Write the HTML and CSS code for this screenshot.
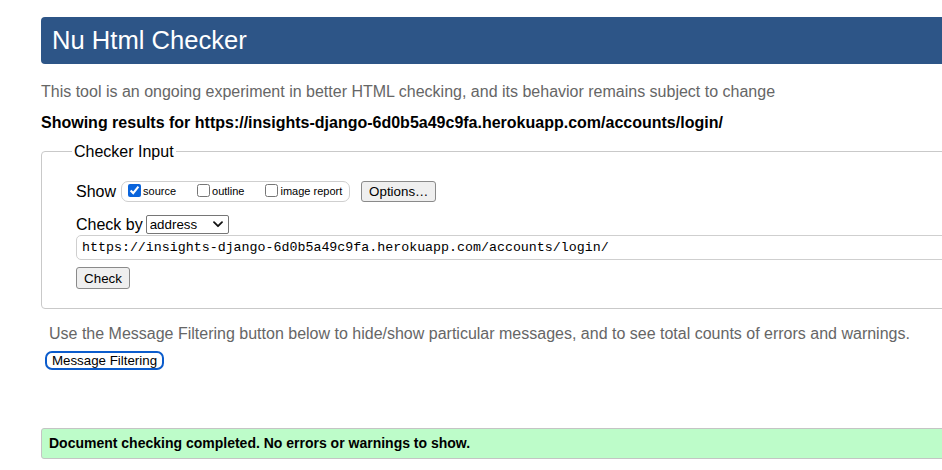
FILE: index.html
```html
<!DOCTYPE html>
<html lang="en">
<head>
<meta charset="utf-8">
<title>Nu Html Checker</title>
<link rel="stylesheet" href="styles.css">
</head>
<body>
<div class="page">
  <h1 class="title">Nu Html Checker</h1>
  <p class="intro">This tool is an ongoing experiment in better HTML checking, and its behavior remains subject to change</p>
  <p class="results">Showing results for https://insights-django-6d0b5a49c9fa.herokuapp.com/accounts/login/</p>
  <fieldset class="checker">
    <legend class="legend">Checker Input</legend>
    <div class="row show-row">
      <span class="label">Show</span>
      <span class="show-box">
        <label class="opt"><input type="checkbox" checked class="cb"><span>source</span></label>
        <label class="opt"><input type="checkbox" class="cb"><span>outline</span></label>
        <label class="opt"><input type="checkbox" class="cb"><span>image report</span></label>
      </span>
      <button class="btn options">Options…</button>
    </div>
    <div class="row by-row">
      <span class="label">Check by</span>
      <span class="select-wrap">
        <select class="select"><option>address</option></select>
        <svg class="chev" width="10" height="7" viewBox="0 0 10 7"><path d="M1 1.2 L5 5.2 L9 1.2" fill="none" stroke="#111" stroke-width="1.8" stroke-linecap="round" stroke-linejoin="round"/></svg>
      </span>
    </div>
    <div class="url-row">
      <input class="url" type="text" value="https://insights-django-6d0b5a49c9fa.herokuapp.com/accounts/login/">
    </div>
    <div class="check-row">
      <button class="btn check">Check</button>
    </div>
  </fieldset>
  <p class="filter-note">Use the Message Filtering button below to hide/show particular messages, and to see total counts of errors and warnings.</p>
  <button class="filter-btn">Message Filtering</button>
  <div class="success">Document checking completed. No errors or warnings to show.</div>
</div>
</body>
</html>
```
FILE: styles.css
```css
html { overflow: hidden; }
body {
  margin: 0;
  font-family: "Liberation Sans", Arial, Helvetica, sans-serif;
  color: #000;
  background: #fff;
}
.page {
  width: 1000px;
  padding: 17px 0 0 41px;
}
.title {
  margin: 0;
  height: 47px;
  line-height: 47px;
  padding: 0 11px;
  background: #2d5587;
  color: #fff;
  font-size: 25.6px;
  font-weight: normal;
  border-radius: 4px 0 0 4px;
}
.intro {
  margin: 18px 0 0;
  font-size: 16px;
  line-height: 19px;
  color: #666;
}
.results {
  margin: 12px 0 0;
  font-size: 16px;
  line-height: 19px;
  font-weight: bold;
}
.checker {
  margin: 10px 0 0;
  padding: 19px 0 19px 34px;
  border: 1px solid #c9c9c9;
  border-radius: 4px;
  min-inline-size: 0;
}
.legend {
  padding: 0 2px;
  margin-left: -4px;
  font-size: 16px;
  line-height: 19px;
}
.row {
  display: flex;
  align-items: center;
}
.show-row { height: 22px; }
.label {
  font-size: 16px;
  line-height: 19px;
}
.show-box {
  display: flex;
  align-items: center;
  height: 19px;
  margin-left: 5px;
  padding: 0 7px 0 6px;
  border: 1px solid #cfcfcf;
  border-radius: 7px;
  gap: 21px;
}
.opt {
  display: flex;
  align-items: center;
  font-size: 11px;
  gap: 2px;
}
.cb {
  width: 13px;
  height: 13px;
  margin: 0 0 2px 0;
  accent-color: #0a64dc;
}
.btn {
  font-family: "Liberation Sans", Arial, sans-serif;
  font-size: 13.333px;
  color: #000;
  background: #efefef;
  border: 1px solid #8a8a8a;
  border-radius: 3px;
  padding: 0 6px;
  height: 21px;
  line-height: 19px;
}
.options {
  margin-left: 11px;
  width: 75px;
}
.by-row {
  margin-top: 12px;
  height: 20px;
}
.select-wrap {
  position: relative;
  margin-left: 3px;
  display: inline-block;
  height: 19px;
}
.select {
  appearance: none;
  -webkit-appearance: none;
  width: 83px;
  height: 19px;
  font-family: "Liberation Sans", Arial, sans-serif;
  font-size: 13.333px;
  padding: 0 0 0 3px;
  border: 1px solid #767676;
  border-radius: 2px;
  background: #fff;
  color: #000;
}
.chev {
  position: absolute;
  right: 6px;
  top: 6px;
  pointer-events: none;
}
.url-row { margin-top: 1px; }
.url {
  display: block;
  box-sizing: border-box;
  width: 1000px;
  height: 25px;
  padding: 0 0 0 5px;
  border: 1px solid #cfcfcf;
  border-radius: 5px;
  font-family: "Liberation Mono", "DejaVu Sans Mono", monospace;
  font-size: 13.3px;
  color: #000;
}
.check-row { margin-top: 7px; }
.check {
  width: 54px;
  height: 22px;
}
.filter-note {
  margin: 15px 0 0 8px;
  font-size: 16px;
  line-height: 19px;
  color: #666;
}
.filter-btn {
  display: block;
  margin: 8px 0 0 4px;
  width: 119px;
  height: 19px;
  padding: 0;
  font-family: "Liberation Sans", Arial, sans-serif;
  font-size: 13.333px;
  line-height: 15px;
  color: #000;
  background: #fff;
  border: 2px solid #0b5ccc;
  border-radius: 7px;
}
.success {
  margin-top: 58px;
  height: 29px;
  line-height: 29px;
  padding-left: 7px;
  background: #bdfcc9;
  border: 1px solid #c4c4c4;
  border-radius: 3px;
  font-size: 14px;
  font-weight: bold;
}
```
